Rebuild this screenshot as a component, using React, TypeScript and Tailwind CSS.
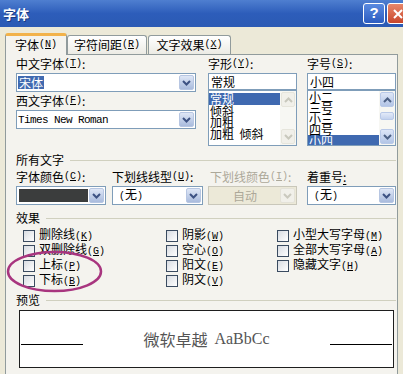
import React from "react";

const cjk = "font-['Noto_Sans_CJK_SC',sans-serif]";
const mono = "font-['Liberation_Mono',monospace] text-[10px]";

function K({ c }: { c: string }) {
  return (
    <span className={mono}>
      (<span className="underline underline-offset-1">{c}</span>)
    </span>
  );
}

function Chevron({ up, color = "#3d5283" }: { up?: boolean; color?: string }) {
  return (
    <svg width="9" height="6" viewBox="0 0 9 6" fill="none">
      <path d={up ? "M1 5l3.5-3.5L8 5" : "M1 1l3.5 3.5L8 1"} stroke={color} strokeWidth="2" />
    </svg>
  );
}

function DropBtn({ disabled }: { disabled?: boolean }) {
  return (
    <div
      className={`flex w-[15px] shrink-0 items-center justify-center rounded-[2px] border ${
        disabled
          ? "border-[#e4e2d8] bg-[#f1f0ea]"
          : "border-[#b7c6e2] bg-linear-to-b from-[#dfe7f6] to-[#a9bbdd]"
      }`}
    >
      <Chevron color={disabled ? "#cac9be" : "#3d5283"} />
    </div>
  );
}

function Combo({
  className = "",
  disabled,
  children,
}: {
  className?: string;
  disabled?: boolean;
  children: React.ReactNode;
}) {
  return (
    <div
      className={`flex h-[19px] border p-px ${
        disabled ? "border-[#c9c7ba] bg-[#ece9d8]" : "border-[#7f9db9] bg-white"
      } ${className}`}
    >
      <div className="flex min-w-0 flex-1 items-center leading-[14px]">{children}</div>
      <DropBtn disabled={disabled} />
    </div>
  );
}

function Label({ children, className = "" }: { children: React.ReactNode; className?: string }) {
  return <div className={`flex h-[18px] items-center leading-[14px] ${className}`}>{children}</div>;
}

function Group({ title }: { title: string }) {
  return (
    <div className="flex h-[16px] items-center">
      <span className="leading-[16px]">{title}</span>
      <div className="ml-[6px] h-px flex-1 bg-[#d0d0bf]" />
    </div>
  );
}

function ScrollBtn({ up, active }: { up?: boolean; active?: boolean }) {
  return (
    <div
      className={`flex h-[15px] items-center justify-center rounded-[2px] border ${
        active
          ? "border-[#b9c9e8] bg-linear-to-b from-[#dde6f7] to-[#b3c5e6]"
          : "border-[#e6e5dc] bg-[#f1f0ea]"
      }`}
    >
      <Chevron up={up} color={active ? "#4d6185" : "#c8c8bd"} />
    </div>
  );
}

function ListBox({
  items,
  selected,
  leading,
  pad,
  active,
}: {
  items: string[];
  selected: number;
  leading: string;
  pad: string;
  active?: boolean;
}) {
  return (
    <div className="flex h-[56px] border border-[#7f9db9] bg-white">
      <div className={`min-w-0 flex-1 overflow-hidden ${leading} ${pad}`}>
        {items.map((it, i) => (
          <div
            key={i}
            className={`whitespace-pre pl-px ${i === selected ? "bg-[#3f69b0] text-white" : ""}`}
          >
            {it}
          </div>
        ))}
      </div>
      <div className="flex w-[16px] shrink-0 flex-col justify-between bg-[#f7f7f3] p-px">
        <ScrollBtn up active={active} />
        {active && (
          <div className="mb-auto mt-[5px] h-[8px] rounded-[2px] border border-[#b9c9e8] bg-linear-to-b from-[#e3eaf8] to-[#c3d2ee]" />
        )}
        <ScrollBtn active={active} />
      </div>
    </div>
  );
}

function Check({ label, k }: { label: string; k: string }) {
  return (
    <div className="flex h-[15px] items-center">
      <div className="h-[12px] w-[12px] border border-[#3a4b60] bg-linear-to-br from-[#d8dce2] to-white" />
      <span className="ml-[4px] leading-[14px]">
        {label}
        <K c={k} />
      </span>
    </div>
  );
}

export default function App() {
  return (
    <div className={`relative h-[374px] w-[403px] overflow-hidden bg-[#ece9d8] text-[12px] text-black ${cjk}`}>
      {/* Title bar */}
      <div className="flex h-[27px] items-center bg-linear-to-b from-[#4f7fd0] via-[#2d5dba] to-[#2b5ab4] pl-[3px]">
        <span className="text-[13px] font-bold leading-[16px] text-white [text-shadow:1px_1px_0_#1a3a80]">字体</span>
        <div className="-mr-[6px] ml-auto flex gap-[2px]">
          <div className="flex h-[21px] w-[22px] items-center justify-center rounded-[3px] border border-white bg-linear-to-b from-[#5a8ae0] to-[#2c5cc0] font-['Liberation_Sans',sans-serif] text-[15px] font-bold text-white">
            ?
          </div>
          <div className="flex h-[21px] w-[22px] items-center justify-center rounded-[3px] border border-white bg-linear-to-b from-[#e8876a] to-[#c8452a]">
            <svg width="10" height="10" viewBox="0 0 10 10">
              <path d="M1 1l8 8M9 1l-8 8" stroke="white" strokeWidth="2" />
            </svg>
          </div>
        </div>
      </div>

      <div className="pl-[5px] pt-[6px]">
        {/* Tabs */}
        <div className="flex h-[21px] items-end">
          <div className="relative z-10 -mb-px flex h-[22px] w-[62px] items-center justify-center rounded-t-[3px] border-x border-t-[3px] border-x-[#919b9c] border-t-[#f2b24a] bg-[#f4f3ee] pb-[2px] leading-[14px]">
            字体<K c="N" />
          </div>
          <div className="flex h-[19px] w-[80px] items-center justify-center rounded-t-[3px] border-x border-t border-[#919b9c] bg-linear-to-b from-white to-[#ecebe4] leading-[14px]">
            字符间距<K c="R" />
          </div>
          <div className="ml-px flex h-[19px] w-[83px] items-center justify-center rounded-t-[3px] border-x border-t border-[#919b9c] bg-linear-to-b from-white to-[#ecebe4] leading-[14px]">
            文字效果<K c="X" />
          </div>
        </div>

        {/* Panel */}
        <div className="h-[330px] w-[393px] border border-[#919b9c] bg-[#f4f3ee] pl-[10px] pr-px">
          {/* Fonts / style / size */}
          <div className="flex">
            <div className="w-[180px]">
              <Label>
                中文字体<K c="T" />:
              </Label>
              <Combo>
                <span className="bg-[#416ab0] px-px leading-[13px] text-white">宋体</span>
              </Combo>
              <Label className="h-[17px]">
                西文字体<K c="F" />:
              </Label>
              <Combo>
                <span className="font-['Liberation_Mono',monospace] text-[11px] tracking-[-0.6px]">Times New Roman</span>
              </Combo>
            </div>
            <div className="ml-[12px] w-[89px]">
              <Label>
                字形<K c="Y" />:
              </Label>
              <div className="flex h-[17px] items-center border border-[#7f9db9] bg-white pl-[2px] leading-[14px]">常规</div>
              <ListBox
                items={["常规", "倾斜", "加粗", "加粗  倾斜"]}
                selected={0}
                leading="leading-[11.5px]"
                pad="pt-[2px]"
              />
            </div>
            <div className="ml-[10px] w-[89px]">
              <Label>
                字号<K c="S" />:
              </Label>
              <div className="flex h-[17px] items-center border border-[#7f9db9] bg-white pl-[2px] leading-[14px]">小四</div>
              <ListBox
                items={["小二", "三号", "小三", "四号", "小四"]}
                selected={4}
                leading="leading-[11px]"
                pad="pt-0"
                active
              />
            </div>
          </div>

          {/* All text */}
          <div className="mt-[6px]">
            <Group title="所有文字" />
          </div>
          <div className="flex">
            <div className="w-[90px]">
              <Label>
                字体颜色<K c="C" />:
              </Label>
              <Combo>
                <div className="ml-px mr-px h-[13px] flex-1 bg-[#3b3d3d]" />
              </Combo>
            </div>
            <div className="ml-[6px] w-[91px]">
              <Label>
                下划线线型<K c="U" />:
              </Label>
              <Combo>
                <span className="pl-[5px]">
                  <span className={mono}>(</span>无<span className={mono}>)</span>
                </span>
              </Combo>
            </div>
            <div className="ml-[5px] w-[89px]">
              <Label className="pl-[2px] text-[#aca899]">
                下划线颜色<K c="I" />:
              </Label>
              <Combo disabled>
                <span className="flex-1 text-center text-[#aca899]">自动</span>
              </Combo>
            </div>
            <div className="ml-[10px] w-[89px]">
              <Label>
                着重号<span className="underline underline-offset-2">:</span>
              </Label>
              <Combo>
                <span className="pl-[5px]">
                  <span className={mono}>(</span>无<span className={mono}>)</span>
                </span>
              </Combo>
            </div>
          </div>

          {/* Effects */}
          <div className="mt-[5px]">
            <Group title="效果" />
          </div>
          <div className="mt-[2px] grid grid-flow-col grid-cols-[143px_111px_1fr] grid-rows-4 pl-[7px]">
            <Check label="删除线" k="K" />
            <Check label="双删除线" k="G" />
            <Check label="上标" k="P" />
            <Check label="下标" k="B" />
            <Check label="阴影" k="W" />
            <Check label="空心" k="O" />
            <Check label="阳文" k="E" />
            <Check label="阴文" k="V" />
            <Check label="小型大写字母" k="M" />
            <Check label="全部大写字母" k="A" />
            <Check label="隐藏文字" k="H" />
          </div>

          {/* Preview */}
          <div className="mt-[4px]">
            <Group title="预览" />
          </div>
          <div className="ml-[3px] mt-[2px] flex h-[58px] w-[375px] items-center justify-between border border-[#1e1e1e] bg-white px-px">
            <div className="mt-[10px] h-px w-[62px] bg-black" />
            <div className="flex items-center gap-[7px] text-[#555]">
              <span className="text-[16px] leading-[20px]">微软卓越</span>
              <span className="font-['Liberation_Serif',serif] text-[16px] leading-[20px]">AaBbCc</span>
            </div>
            <div className="mt-[10px] h-px w-[62px] bg-black" />
          </div>
        </div>
      </div>

      {/* Hand-drawn highlight ellipse */}
      <svg className="absolute left-[6px] top-[250px]" width="97" height="44" viewBox="0 0 97 44" fill="none">
        <ellipse cx="48.5" cy="21.5" rx="46.5" ry="19.5" stroke="#a8357f" strokeWidth="2.5" />
      </svg>
    </div>
  );
}
